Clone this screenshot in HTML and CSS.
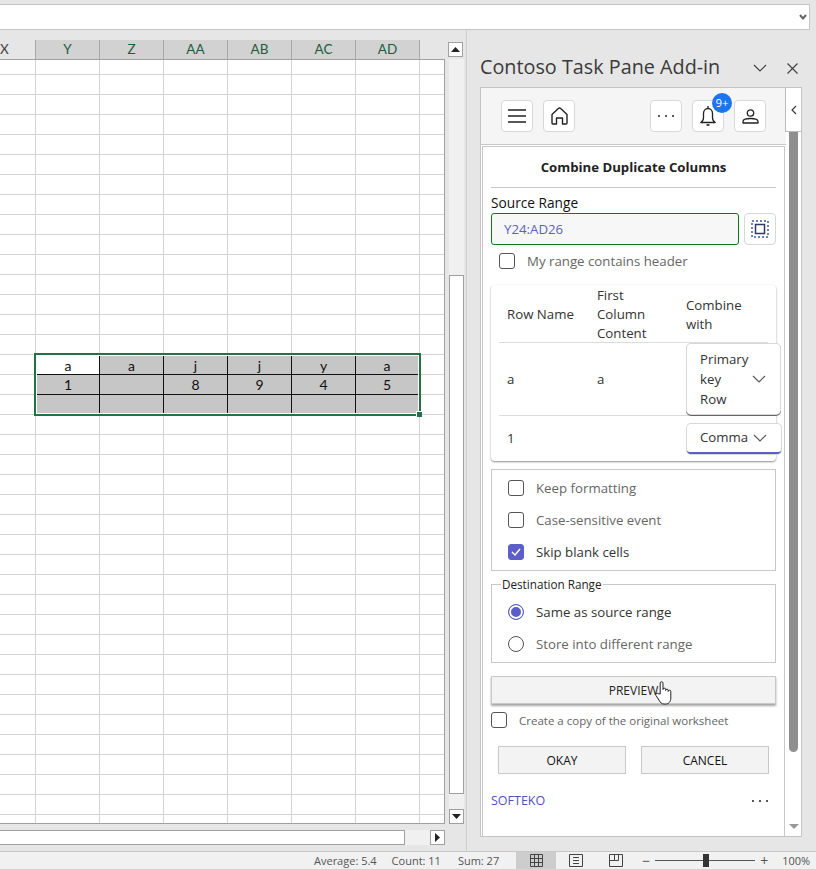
FILE: index.html
```html
<!DOCTYPE html>
<html lang="en">

<head>
    <meta charset="UTF-8">
    <title>Combine Duplicate Columns</title>
    <link rel="stylesheet" href="styles.css">
</head>

<body>
    <div class="formula-bar">
        <div class="formula-input">
            <svg width="8" height="6" viewBox="0 0 8 6"><path d="M1 1l3 3.500L7 1" fill="none" stroke="#666" stroke-width="2"/></svg>
        </div>
    </div>

    <div class="workspace">
        <div class="excel">
            <div class="excel-top">
                <div class="col-headers">
                    <div class="col col-x">X</div>
                    <div class="col sel">Y</div>
                    <div class="col sel">Z</div>
                    <div class="col sel">AA</div>
                    <div class="col sel">AB</div>
                    <div class="col sel">AC</div>
                    <div class="col sel">AD</div>
                </div>
                <div class="scroll-btn-wrap">
                    <div class="scroll-btn"><svg width="9" height="5" viewBox="0 0 9 5"><path d="M4.500 0L9 5H0z" fill="#222"/></svg></div>
                </div>
            </div>
            <div class="excel-mid">
                <div class="sheet">
                    <div class="selection">
                        <div class="cell cell-active">a</div>
                        <div class="cell">a</div>
                        <div class="cell">j</div>
                        <div class="cell">j</div>
                        <div class="cell">y</div>
                        <div class="cell">a</div>
                        <div class="cell">1</div>
                        <div class="cell"></div>
                        <div class="cell">8</div>
                        <div class="cell">9</div>
                        <div class="cell">4</div>
                        <div class="cell">5</div>
                        <div class="cell"></div>
                        <div class="cell"></div>
                        <div class="cell"></div>
                        <div class="cell"></div>
                        <div class="cell"></div>
                        <div class="cell"></div>
                        <div class="sel-handle"></div>
                    </div>
                </div>
                <div class="vscroll">
                    <div class="vscroll-track"><div class="vscroll-thumb"></div></div>
                    <div class="scroll-btn"><svg width="9" height="5" viewBox="0 0 9 5"><path d="M0 0h9L4.500 5z" fill="#222"/></svg></div>
                </div>
            </div>
            <div class="hscroll">
                <div class="hscroll-thumb"></div>
                <div class="scroll-btn"><svg width="5" height="9" viewBox="0 0 5 9"><path d="M0 0l5 4.500L0 9z" fill="#222"/></svg></div>
            </div>
        </div>

        <div class="pane">
            <div class="pane-title">
                <span class="pane-name">Contoso Task Pane Add-in</span>
                <svg class="pane-chevron" width="14" height="8" viewBox="0 0 14 8"><path d="M1 1l6 6 6-6" fill="none" stroke="#444" stroke-width="1.200"/></svg>
                <svg class="pane-close" width="11" height="11" viewBox="0 0 11 11"><path d="M.5.500l10 10M10.500.500l-10 10" fill="none" stroke="#444" stroke-width="1.200"/></svg>
            </div>
            <div class="pane-frame">
                <div class="pane-body">
                    <div class="toolbar">
                        <button class="tool-btn">
                            <svg width="18" height="14" viewBox="0 0 18 14"><path d="M0 1h18M0 7h18M0 13h18" stroke="#222" stroke-width="1.400" fill="none"/></svg>
                        </button>
                        <button class="tool-btn">
                            <svg width="17" height="18" viewBox="0 0 17 18"><path d="M1 7.500L7.300 1.500a1.700 1.700 0 0 1 2.400 0L16 7.500V16a1 1 0 0 1-1 1h-3.500v-6h-6v6H2a1 1 0 0 1-1-1z" fill="none" stroke="#222" stroke-width="1.400" stroke-linejoin="round"/></svg>
                        </button>
                        <div class="tool-gap"></div>
                        <button class="tool-btn">
                            <svg width="18" height="4" viewBox="0 0 18 4"><circle cx="2" cy="2" r="1" fill="#222"/><circle cx="9" cy="2" r="1" fill="#222"/><circle cx="16" cy="2" r="1" fill="#222"/></svg>
                        </button>
                        <button class="tool-btn">
                            <svg width="16" height="20" viewBox="0 0 16 20"><path d="M.8 16.500c1.500-1 2.700-2.500 2.700-5V7.500c0-3 2-5 4.500-5s4.500 2 4.500 5v4c0 2.500 1.200 4 2.700 5z" fill="none" stroke="#222" stroke-width="1.300" stroke-linejoin="round"/><path d="M8 0v2.500" stroke="#222" stroke-width="1.300"/><path d="M6.500 19h3" stroke="#222" stroke-width="1.600"/></svg>
                            <span class="badge">9+</span>
                        </button>
                        <button class="tool-btn">
                            <svg width="17" height="15" viewBox="0 0 17 15"><circle cx="8.500" cy="4" r="3.200" fill="none" stroke="#222" stroke-width="1.300"/><path d="M1 14v-1.500c0-2 3-3 7.500-3s7.500 1 7.500 3V14z" fill="none" stroke="#222" stroke-width="1.300" stroke-linejoin="round"/></svg>
                        </button>
                    </div>
                    <div class="content">
                        <h1 class="heading">Combine Duplicate Columns</h1>
                        <div class="field-label">Source Range</div>
                        <div class="range-row">
                            <div class="range-input">Y24:AD26</div>
                            <button class="range-btn">
                                <svg width="18" height="18" viewBox="0 0 18 18"><rect x="1" y="1" width="16" height="16" fill="none" stroke="#3f5a9a" stroke-width="1.500" stroke-dasharray="2 2"/><rect x="4.500" y="4.500" width="9" height="9" fill="none" stroke="#2c3e66" stroke-width="1.500"/></svg>
                            </button>
                        </div>
                        <label class="check check-header"><span class="box"></span>My range contains header</label>

                        <div class="table-card">
                            <div class="t-row t-head">
                                <div>Row Name</div>
                                <div class="t-narrow">First Column Content</div>
                                <div>Combine with</div>
                            </div>
                            <div class="t-row t-primary">
                                <div>a</div>
                                <div>a</div>
                                <div class="drop drop-tall">
                                    <span>Primary key Row</span>
                                    <svg width="14" height="8" viewBox="0 0 14 8"><path d="M1 1l6 6 6-6" fill="none" stroke="#555" stroke-width="1.100"/></svg>
                                </div>
                            </div>
                            <div class="t-row t-last">
                                <div>1</div>
                                <div></div>
                                <div class="drop drop-short">
                                    <span>Comma</span>
                                    <svg width="14" height="8" viewBox="0 0 14 8"><path d="M1 1l6 6 6-6" fill="none" stroke="#555" stroke-width="1.100"/></svg>
                                </div>
                            </div>
                        </div>

                        <div class="options">
                            <label class="check"><span class="box"></span>Keep formatting</label>
                            <label class="check"><span class="box"></span>Case-sensitive event</label>
                            <label class="check check-on"><span class="box box-on"><svg width="10" height="8" viewBox="0 0 10 8"><path d="M1 4l3 3 5-6" fill="none" stroke="#fff" stroke-width="1.400"/></svg></span>Skip blank cells</label>
                        </div>

                        <fieldset class="dest">
                            <legend>Destination Range</legend>
                            <label class="check check-on"><span class="radio radio-on"></span>Same as source range</label>
                            <label class="check"><span class="radio"></span>Store into different range</label>
                        </fieldset>

                        <button class="preview">PREVIEW
                            <svg class="cursor" width="18" height="24" viewBox="0 0 18 24"><path d="M5.200 13V2.200a1.400 1.400 0 0 1 2.800 0V8.500a1.300 1.300 0 0 1 2.600 0v1a1.300 1.300 0 0 1 2.600 0v1a1.300 1.300 0 0 1 2.600 0V17c0 3.500-2 6-5 6H9c-2.500 0-3.500-1.500-4.500-3L1 14.500c-1-1.500 1-3 2.200-1.800z" fill="#fff" stroke="#222" stroke-width="1"/></svg>
                        </button>
                        <label class="check check-copy"><span class="box"></span>Create a copy of the original worksheet</label>

                        <div class="actions">
                            <button class="act-btn">OKAY</button>
                            <button class="act-btn">CANCEL</button>
                        </div>
                        <div class="brand-row">
                            <span class="brand">SOFTEKO</span>
                            <svg width="18" height="4" viewBox="0 0 18 4"><circle cx="2" cy="2" r="1" fill="#222"/><circle cx="9" cy="2" r="1" fill="#222"/><circle cx="16" cy="2" r="1" fill="#222"/></svg>
                        </div>
                    </div>
                </div>
                <div class="pane-scroll">
                    <div class="pane-tab"><svg width="6" height="10" viewBox="0 0 6 10"><path d="M5 1L1 5l4 4" fill="none" stroke="#333" stroke-width="1.100"/></svg></div>
                    <div class="pane-thumb"></div>
                    <svg class="pane-down" width="10" height="5" viewBox="0 0 10 5"><path d="M0 0h10L5 5z" fill="#999"/></svg>
                </div>
            </div>
        </div>
    </div>

    <div class="status">
        <span class="stat-avg">Average: 5.4</span>
        <span class="stat-count">Count: 11</span>
        <span class="stat-sum">Sum: 27</span>
        <div class="view view-on">
            <svg width="13" height="13" viewBox="0 0 13 13"><path d="M.5.500h12v12H.5zM.5 4.500h12M.5 8.500h12M4.500.500v12M8.500.500v12" fill="none" stroke="#444"/></svg>
        </div>
        <div class="view">
            <svg width="14" height="13" viewBox="0 0 14 13"><path d="M.5.500h13v12H.5zM4 3.500h6M4 6.500h6M4 9.500h6" fill="none" stroke="#444"/></svg>
        </div>
        <div class="view">
            <svg width="14" height="13" viewBox="0 0 14 13"><path d="M.5.500h13v12H.5zM5.500.500v6h4v-6M.5 6.500h5" fill="none" stroke="#444"/></svg>
        </div>
        <span class="zoom-sign">−</span>
        <div class="slider"><div class="slider-knob"></div></div>
        <span class="zoom-sign">+</span>
        <span class="zoom-val">100%</span>
    </div>
</body>

</html>
```

FILE: styles.css
```css
* {
    box-sizing: border-box;
}

html,
body {
    margin: 0;
    height: 869px;
    overflow: hidden;
}

body {
    width: 816px;
    display: flex;
    flex-direction: column;
    background: #e6e6e6;
    font-family: "Open Sans", "Noto Sans", sans-serif;
    color: #222;
}

button {
    font-family: inherit;
    padding: 0;
}

/* formula bar */

.formula-bar {
    height: 30px;
    padding: 4px 6px 0 0;
    flex: none;
}

.formula-input {
    height: 26px;
    background: #fff;
    border: 1px solid #c4c4c4;
    border-left: none;
    display: flex;
    align-items: center;
    justify-content: flex-end;
    padding-right: 2px;
}

.workspace {
    flex: 1;
    display: flex;
    min-height: 0;
}

/* sheet */

.excel {
    width: 467px;
    flex: none;
    padding-top: 10px;
    border-right: 1px solid #cfcfcf;
    display: flex;
    flex-direction: column;
}

.excel-top {
    display: flex;
    height: 20px;
    flex: none;
}

.col-headers {
    width: 420px;
    display: grid;
    grid-template-columns: 35px 65px repeat(5, 64px);
    font-family: Lato, "Liberation Sans", sans-serif;
    font-size: 13.500px;
    text-align: center;
}

.col {
    line-height: 19px;
    border-right: 1px solid #a8a8a8;
}

.col-x {
    text-align: left;
    border-right: none;
    color: #444;
}

.col.sel {
    background: #d2d2d2;
    color: #1e5c40;
    border-bottom: 2px solid #217346;
    border-left: 1px solid #a8a8a8;
}

.col.sel + .col.sel {
    border-left: none;
}

.scroll-btn-wrap {
    flex: 1;
    display: flex;
    justify-content: flex-end;
    padding: 2px 3px 0 0;
}

.scroll-btn {
    width: 15px;
    height: 15px;
    background: #fff;
    border: 1px solid #a0a0a0;
    display: flex;
    align-items: center;
    justify-content: center;
    flex: none;
}

.excel-mid {
    height: 765px;
    margin-top: -1px;
    display: flex;
    flex: none;
}

.sheet {
    position: relative;
    width: 445px;
    flex: none;
    background-color: #fff;
    background-image:
        repeating-linear-gradient(to bottom, transparent 0, transparent 14px, #d4d4d4 14px, #d4d4d4 15px, transparent 15px, transparent 20px),
        repeating-linear-gradient(to right, #d4d4d4 0, #d4d4d4 1px, transparent 1px, transparent 64px);
    background-size: 100% 100%, 385px 100%;
    background-position: 0 0, 35px 0;
    background-repeat: repeat-y, no-repeat;
    border-right: 1px solid #a0a0a0;
    border-bottom: 1px solid #a0a0a0;
    border-top: 1px solid #a0a0a0;
}

.selection {
    position: absolute;
    left: 34px;
    top: 293px;
    width: 387px;
    height: 63px;
    border: 2px solid #217346;
    padding: 1px;
    background: #fff;
    display: grid;
    grid-template-columns: 63px repeat(4, 64px) 62px;
    grid-template-rows: 19px 20px 18px;
    font-family: Lato, "Liberation Sans", sans-serif;
    font-size: 14px;
    text-align: center;
    color: #111;
}

.cell {
    background: #c6c6c6;
    line-height: 19px;
    border-right: 1px solid #111;
    border-bottom: 1px solid #111;
}

.cell:nth-child(6n) {
    border-right: none;
}

.cell:nth-child(n+13) {
    border-bottom: none;
}

.cell.cell-active {
    background: #fff;
}

.sel-handle {
    position: absolute;
    right: -3px;
    bottom: -3px;
    width: 6px;
    height: 6px;
    background: #217346;
    border-left: 1px solid #fff;
    border-top: 1px solid #fff;
}

.vscroll {
    width: 21px;
    padding-left: 4px;
    display: flex;
    flex-direction: column;
    align-items: flex-start;
}

.vscroll-track {
    flex: 1;
    width: 15px;
    background: #f0f0f0;
    padding-top: 216px;
}

.vscroll-thumb {
    height: 519px;
    background: #fff;
    border: 1px solid #a0a0a0;
}

.hscroll {
    display: flex;
    align-items: center;
    height: 15px;
    margin-top: 6px;
    width: 445px;
    background: #f0f0f0;
    justify-content: space-between;
}

.hscroll-thumb {
    width: 405px;
    height: 15px;
    background: #fff;
    border: 1px solid #a0a0a0;
    border-left: none;
}

/* task pane */

.pane {
    flex: 1;
    padding-top: 18px;
    padding-left: 13px;
    display: flex;
    flex-direction: column;
}

.pane-title {
    height: 39px;
    display: flex;
    align-items: center;
    flex: none;
    padding-bottom: 3px;
}

.pane-name {
    font-size: 19.800px;
    color: #3a3a3a;
    flex: 1;
}

.pane-chevron {
    margin: 4px 20px 0 0;
}

.pane-close {
    margin: 4px 18px 0 0;
}

.pane-frame {
    width: 322px;
    height: 750px;
    background: #fff;
    border: 1px solid #c4c4c4;
    display: flex;
    flex: none;
}

.pane-body {
    width: 305px;
    flex: none;
    display: flex;
    flex-direction: column;
}

.toolbar {
    height: 57px;
    flex: none;
    background: #f5f5f5;
    border-bottom: 1px solid #c8c8c8;
    display: flex;
    align-items: center;
    gap: 10px;
    padding: 0 20px;
}

.tool-gap {
    flex: 1;
}

.tool-btn {
    position: relative;
    width: 32px;
    height: 32px;
    background: #fff;
    border: 1px solid #d8d8d8;
    border-radius: 4px;
    display: flex;
    align-items: center;
    justify-content: center;
}

.badge {
    position: absolute;
    top: -8px;
    right: -9px;
    width: 20px;
    height: 20px;
    border-radius: 50%;
    background: #1a75f0;
    color: #fff;
    font-size: 11.500px;
    line-height: 20px;
    text-align: center;
}

.content {
    flex: 1;
    margin: 1px 1px 0 1px;
    border: 1px solid #c8c8c8;
    border-bottom: none;
    padding: 0 8px;
    display: flex;
    flex-direction: column;
    font-size: 13.250px;
}

.heading {
    margin: 0;
    height: 41px;
    line-height: 41px;
    font-size: 13.200px;
    font-weight: 700;
    text-align: center;
    border-bottom: 1px solid #c8c8c8;
    flex: none;
}

.field-label {
    margin-top: 6px;
    line-height: 18px;
    font-size: 13.700px;
    color: #111;
}

.range-row {
    display: flex;
    gap: 5px;
    margin-top: 1px;
}

.range-input {
    flex: 1;
    height: 32px;
    background: #f7f7f7;
    border: 1px solid #107c10;
    border-radius: 3px;
    padding-left: 12px;
    line-height: 30px;
    color: #5b5fc7;
}

.range-btn {
    width: 32px;
    height: 32px;
    background: #fff;
    border: 1px solid #d8d8d8;
    border-radius: 4px;
    display: flex;
    align-items: center;
    justify-content: center;
}

.check {
    display: flex;
    align-items: center;
    height: 32px;
    padding-left: 16px;
    color: #666;
}

.check-on {
    color: #333;
}

.check-header {
    padding-left: 8px;
    flex: none;
}

.box {
    width: 16px;
    height: 16px;
    border: 1px solid #555;
    border-radius: 3px;
    margin-right: 12px;
    flex: none;
    display: flex;
    align-items: center;
    justify-content: center;
}

.box-on {
    background: #5b5fc7;
    border-color: #5b5fc7;
}

.radio {
    width: 16px;
    height: 16px;
    border: 1px solid #555;
    border-radius: 50%;
    margin-right: 12px;
    flex: none;
}

.radio-on {
    border-color: #5b5fc7;
    background: #5b5fc7;
    box-shadow: inset 0 0 0 2px #fff;
}

/* table */

.table-card {
    margin-top: 8px;
    width: 285px;
    height: 176px;
    background: #fff;
    border-radius: 4px;
    box-shadow: 0 1px 2px rgba(0, 0, 0, 0.45);
    flex: none;
    color: #333;
}

.t-row {
    display: grid;
    grid-template-columns: 90px 89px 1fr;
    align-items: center;
    line-height: 19px;
    border-bottom: 1px solid #dcdcdc;
    margin: 0 8px;
    padding-left: 8px;
}

.t-narrow {
    padding-right: 30px;
}

.t-head {
    height: 58px;
    padding-top: 1px;
}

.t-primary {
    height: 73px;
}

.t-last {
    height: 45px;
    border-bottom: none;
}

.drop {
    display: flex;
    align-items: center;
    justify-content: space-between;
    background: #fff;
    border-radius: 4px;
    box-shadow: 0 0 0 1px #d8d8d8;
    margin-left: 1px;
    padding: 0 14px 0 13px;
    width: 93px;
}

.drop-tall {
    height: 70px;
    line-height: 20px;
    box-shadow: 0 0 0 1px #d8d8d8, 0 1px 0 1px #666;
}

.drop-tall span {
    width: 48px;
}

.drop-short {
    height: 30px;
    width: 94px;
    border-bottom: 2px solid #5b5fc7;
}

.options {
    margin-top: 8px;
    height: 102px;
    border: 1px solid #c8c8c8;
    padding-top: 2px;
    flex: none;
}

.dest {
    margin: 6px 0 0;
    padding: 5px 0 0;
    height: 86px;
    border: 1px solid #c8c8c8;
    flex: none;
}

.dest legend {
    font-size: 11.700px;
    padding: 0 1px;
    margin-left: 9px;
    line-height: 14px;
    color: #222;
}

/* buttons */

.preview {
    position: relative;
    margin-top: 13px;
    height: 28px;
    background: #f3f3f3;
    border: 1px solid #c8c8c8;
    box-shadow: 0 2px 2px rgba(0, 0, 0, 0.35);
    font-size: 12px;
    color: #222;
    flex: none;
}

.cursor {
    position: absolute;
    left: 163px;
    top: 4px;
}

.check-copy {
    padding-left: 0;
    font-size: 11.500px;
    flex: none;
}

.actions {
    display: flex;
    justify-content: space-between;
    padding: 0 7px;
    margin-top: 10px;
}

.act-btn {
    width: 128px;
    height: 28px;
    background: #f3f3f3;
    border: 1px solid #c8c8c8;
    font-size: 12px;
    color: #111;
}

.brand-row {
    display: flex;
    justify-content: space-between;
    align-items: center;
    padding-right: 7px;
    margin-top: 18px;
    font-size: 12.500px;
}

.brand {
    color: #4f52b2;
}

.pane-scroll {
    flex: 1;
    position: relative;
    display: flex;
    flex-direction: column;
    align-items: center;
}

.pane-tab {
    position: absolute;
    left: -1px;
    top: 0;
    width: 16px;
    height: 44px;
    background: #fff;
    border-left: 1px solid #bbb;
    border-bottom: 1px solid #bbb;
    display: flex;
    align-items: center;
    justify-content: center;
}

.pane-thumb {
    margin-top: 44px;
    width: 9px;
    height: 620px;
    background: #8f8f8f;
    border-radius: 0 0 5px 5px;
}

.pane-down {
    margin-top: 72px;
}

/* status bar */

.status {
    height: 18px;
    flex: none;
    background: #f1f1f1;
    border-top: 1px solid #c8c8c8;
    display: flex;
    align-items: center;
    font-size: 11px;
    color: #555;
}

.stat-avg {
    margin-left: 314px;
}

.stat-count {
    margin-left: 15px;
}

.stat-sum {
    margin-left: 17px;
}

.view {
    width: 40px;
    height: 17px;
    display: flex;
    align-items: center;
    justify-content: center;
}

.view-on {
    margin-left: 17px;
    background: #cdcdcd;
}

.zoom-sign {
    font-size: 14px;
    width: 14px;
    text-align: center;
}

.view + .zoom-sign {
    margin-left: 3px;
}

.slider {
    position: relative;
    width: 100px;
    height: 1px;
    background: #555;
    margin: 0 2px;
}

.slider-knob {
    position: absolute;
    left: 48px;
    top: -6px;
    width: 6px;
    height: 13px;
    background: #333;
}

.zoom-val {
    margin-left: 11px;
}
```
